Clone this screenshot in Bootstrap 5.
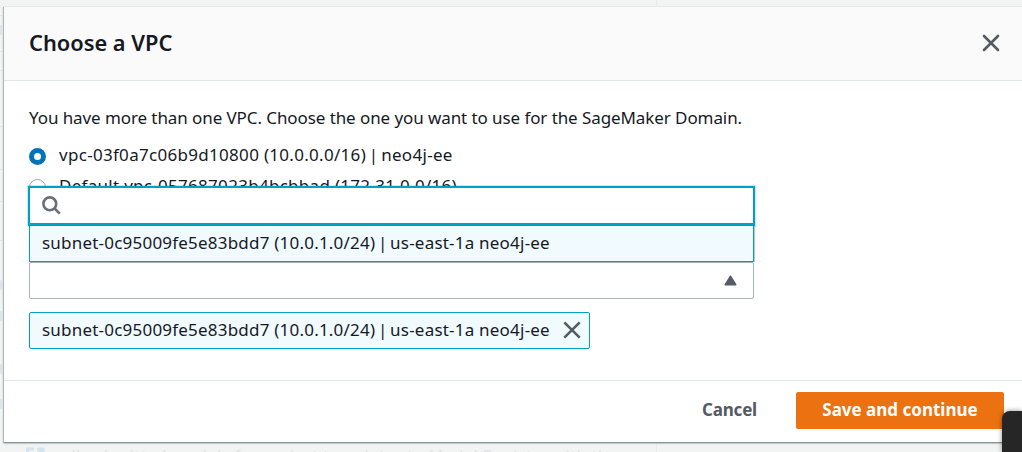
<!DOCTYPE html>
<html lang="en">
<head>
<meta charset="utf-8">
<title>Choose a VPC</title>
<link href="https://cdn.jsdelivr.net/npm/bootstrap@5.3.0/dist/css/bootstrap.min.css" rel="stylesheet">
<script src="https://cdn.jsdelivr.net/npm/bootstrap@5.3.0/dist/js/bootstrap.bundle.min.js"></script>
<style>
  body { width: 1022px; height: 452px; background: #f2f3f3; color: #16191f; font: 400 17px/24px "Noto Sans", "Open Sans", sans-serif; }
  .vpc-dialog { width: 1022px; height: 436px; margin: 6px 0 0 4px; border-top: 1px solid #e3e9e8; background: #fff; box-shadow: 0 1px 0 #879596, 0 2px 1px #c3cccd, -1px 1px 1px rgba(0,28,36,.3); }
  .vpc-head { height: 74px; padding: 0 26px 2px 25px; background: #fafafa; border-bottom: 1px solid #e3e9e8; }
  .vpc-title { font-size: 21.8px; line-height: 28px; font-weight: 600; }
  .vpc-body { height: 300px; padding: 25px 25px 0; border-bottom: 1px solid #e3e9e8; }
  .intro { letter-spacing: -.085px; }
  .choice { gap: 13px; height: 24px; margin-top: 13px; letter-spacing: .3px; }
  .choice + .choice { margin-top: 7px; letter-spacing: .29px; }
  .radio-dot { width: 17px; height: 17px; border: 1px solid #95a5a6; border-radius: 50%; background: #fff; margin-top: 2px; }
  .radio-dot.on { border: 5.5px solid #0073bb; }
  .pipe { margin: 0 -2px; }
  .picker { width: 725px; margin-top: 64px; }
  .picker-box { height: 37px; border: 1px solid #aab7b8; border-radius: 2px; padding-right: 16px; }
  .picker-menu { left: -1px; bottom: 37px; width: 727px; }
  .picker-search { height: 40px; border: 2px solid #00a1c9; border-bottom-width: 3px; background: #fff; padding-left: 12px; box-shadow: 0 0 0 1px rgba(0,161,201,.22); }
  .picker-option { height: 36px; margin: 0 1px; border: 1px solid #00a1c9; border-top: 0; background: #f1faff; padding: 0 0 1px 12px; box-shadow: 1px 0 1px rgba(0,28,36,.25); }
  .subnet { letter-spacing: .21px; }
  .token { height: 37px; width: 561px; margin-top: 13px; padding: 0 8px 1px 12px; border: 1px solid #00a1c9; border-radius: 2px; background: #f1faff; }
  .vpc-foot { height: 61px; padding: 0 22px 3px 0; gap: 39px; font-weight: 700; }
  .cancel { color: #545b64; letter-spacing: -.18px; }
  .save { width: 208px; height: 37px; padding-bottom: 1px; background: #ec7211; color: #fff; border-radius: 2px; }
  .corner { right: 0; bottom: 0; width: 20px; height: 41px; background: #262626; border-radius: 8px 0 0 0; box-shadow: 0 0 5px rgba(0,0,0,.45); }
  .page-under { padding-left: 26px; gap: 17px; height: 8px; color: #dfe3e4; font-size: 16px; line-height: 20px; letter-spacing: .5px; width: 1022px; }
  .page-under svg { margin-top: 3px; }
  .page-under span { margin-top: 2px; }
  .page-rule { width: 1px; height: 8px; background: #e8ebeb; left: 656px; bottom: 0; }
  .page-rule.top { bottom: auto; top: 0; height: 6px; }
  .edge { width: 3px; left: 0; height: 1px; background: #e0e4e4; }
  .edge.soft { height: 10px; background: #dce6ea; border-radius: 0 3px 3px 0; }
</style>
</head>
<body class="position-relative overflow-hidden m-0 d-flex flex-column">
  <main class="vpc-dialog flex-shrink-0">
    <header class="vpc-head d-flex align-items-center justify-content-between">
      <h1 class="vpc-title m-0">Choose a VPC</h1>
      <svg width="18" height="18" viewBox="0 0 18 18" fill="none" stroke="#545b64" stroke-width="2.6" stroke-linecap="round" aria-label="Close"><path d="M2 2l14 14M16 2L2 16"/></svg>
    </header>
    <section class="vpc-body">
      <p class="intro m-0 text-nowrap">You have more than one VPC. Choose the one you want to use for the SageMaker Domain.</p>
      <label class="choice d-flex align-items-center"><span class="radio-dot on"></span><span>vpc-03f0a7c06b9d10800 (10.0.0.0/16) <span class="pipe">|</span> neo4j-ee</span></label>
      <label class="choice d-flex align-items-center"><span class="radio-dot"></span>Default vpc-057687023b4bcbbad (172.31.0.0/16)</label>
      <div class="picker position-relative">
        <div class="picker-box d-flex align-items-center justify-content-end">
          <svg width="13" height="11" viewBox="0 0 13 11"><path d="M6.5 1.2L11.8 9.7H1.2z" fill="#545b64" stroke="#545b64" stroke-width="1.4" stroke-linejoin="round"/></svg>
        </div>
        <div class="picker-menu position-absolute">
          <div class="picker-search d-flex align-items-center">
            <svg width="19" height="19" viewBox="0 0 19 19" fill="none" stroke="#687078" stroke-width="2.6"><circle cx="7.8" cy="7.8" r="6.4"/><path d="M12.3 12.3l5.5 5.3"/></svg>
          </div>
          <div class="picker-option subnet d-flex align-items-center"><span>subnet-0c95009fe5e83bdd7 (10.0.1.0/24) <span class="pipe">|</span> us-east-1a neo4j-ee</span></div>
        </div>
      </div>
      <div class="token subnet d-flex align-items-center justify-content-between text-nowrap">
        <span>subnet-0c95009fe5e83bdd7 (10.0.1.0/24) <span class="pipe">|</span> us-east-1a neo4j-ee</span>
        <svg width="18" height="18" viewBox="0 0 18 18" fill="none" stroke="#545b64" stroke-width="2.6" aria-label="Remove"><path d="M1.3 1.3l15.4 15.4M16.7 1.3L1.3 16.7"/></svg>
      </div>
    </section>
    <footer class="vpc-foot d-flex align-items-center justify-content-end">
      <span class="cancel">Cancel</span>
      <span class="save d-flex align-items-center justify-content-center">Save and continue</span>
    </footer>
  </main>
  <div class="page-under d-flex align-items-start overflow-hidden flex-shrink-0 text-nowrap mt-auto">
    <svg class="flex-shrink-0" width="19" height="16" viewBox="0 0 19 16" fill="none" stroke="#d5e3ec" stroke-width="3"><path d="M8 2H1.5v13H16V9M11 2h6v5M17 2L9 9"/></svg>
    <span>all submitted models for project templates to Model Registry with the</span>
  </div>
  <i class="page-rule position-absolute"></i>
  <i class="page-rule top position-absolute"></i>
  <i class="edge position-absolute" style="top:15px"></i>
  <i class="edge soft position-absolute" style="top:25px"></i>
  <i class="edge position-absolute" style="top:51px"></i>
  <i class="edge position-absolute" style="top:70px"></i>
  <i class="edge position-absolute" style="top:126px"></i>
  <i class="edge position-absolute" style="top:169px"></i>
  <i class="edge position-absolute" style="top:201px"></i>
  <i class="edge position-absolute" style="top:240px"></i>
  <i class="edge soft position-absolute" style="top:280px"></i>
  <i class="edge soft position-absolute" style="top:311px"></i>
  <i class="edge soft position-absolute" style="top:364px"></i>
  <i class="edge soft position-absolute" style="top:399px"></i>
  <div class="corner position-absolute"></div>
</body>
</html>
